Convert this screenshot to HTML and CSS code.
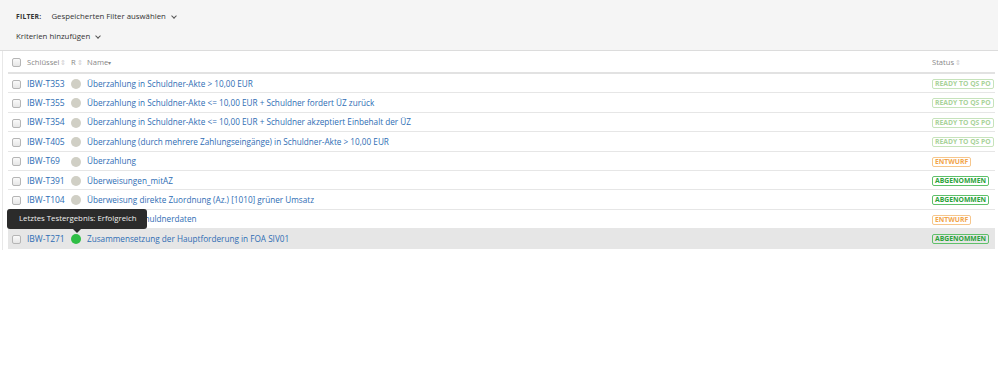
FILE: index.html
```html
<!DOCTYPE html>
<html lang="de">
<head>
  <meta charset="UTF-8">
  <title>Testfälle</title>
  <link rel="stylesheet" href="styles.css">
</head>
<body>

<div class="filter-bar">
  <div class="filter-line">
    <span class="filter-label">Filter:</span>
    <span class="dropdown">Gespeicherten Filter auswählen <span class="chev"></span></span>
  </div>
  <div class="filter-line">
    <span class="dropdown">Kriterien hinzufügen <span class="chev"></span></span>
  </div>
</div>

<div class="results">
  <table class="cases">
    <thead>
      <tr>
        <th class="col-check"><span class="box"></span></th>
        <th class="col-key">Schlüssel<span class="sort">&#8661;</span></th>
        <th class="col-r">R<span class="sort">&#8661;</span></th>
        <th class="col-name">Name<span class="sort-down">&#9662;</span></th>
        <th class="col-status">Status<span class="sort">&#8661;</span></th>
      </tr>
    </thead>
    <tbody>
      <tr>
        <td><span class="box"></span></td>
        <td><a href="#" class="key">IBW-T353</a></td>
        <td><span class="dot"></span></td>
        <td><a href="#">Überzahlung in Schuldner-Akte &gt; 10,00 EUR</a></td>
        <td><span class="badge ready">Ready to QS PO</span></td>
      </tr>
      <tr>
        <td><span class="box"></span></td>
        <td><a href="#" class="key">IBW-T355</a></td>
        <td><span class="dot"></span></td>
        <td><a href="#">Überzahlung in Schuldner-Akte &lt;= 10,00 EUR + Schuldner fordert ÜZ zurück</a></td>
        <td><span class="badge ready">Ready to QS PO</span></td>
      </tr>
      <tr>
        <td><span class="box"></span></td>
        <td><a href="#" class="key">IBW-T354</a></td>
        <td><span class="dot"></span></td>
        <td><a href="#">Überzahlung in Schuldner-Akte &lt;= 10,00 EUR + Schuldner akzeptiert Einbehalt der ÜZ</a></td>
        <td><span class="badge ready">Ready to QS PO</span></td>
      </tr>
      <tr>
        <td><span class="box"></span></td>
        <td><a href="#" class="key">IBW-T405</a></td>
        <td><span class="dot"></span></td>
        <td><a href="#">Überzahlung (durch mehrere Zahlungseingänge) in Schuldner-Akte &gt; 10,00 EUR</a></td>
        <td><span class="badge ready">Ready to QS PO</span></td>
      </tr>
      <tr>
        <td><span class="box"></span></td>
        <td><a href="#" class="key">IBW-T69</a></td>
        <td><span class="dot"></span></td>
        <td><a href="#">Überzahlung</a></td>
        <td><span class="badge draft">Entwurf</span></td>
      </tr>
      <tr>
        <td><span class="box"></span></td>
        <td><a href="#" class="key">IBW-T391</a></td>
        <td><span class="dot"></span></td>
        <td><a href="#">Überweisungen_mitAZ</a></td>
        <td><span class="badge done">Abgenommen</span></td>
      </tr>
      <tr>
        <td><span class="box"></span></td>
        <td><a href="#" class="key">IBW-T104</a></td>
        <td><span class="dot"></span></td>
        <td><a href="#">Überweisung direkte Zuordnung (Az.) [1010] grüner Umsatz</a></td>
        <td><span class="badge done">Abgenommen</span></td>
      </tr>
      <tr>
        <td><span class="box"></span></td>
        <td><a href="#" class="key">IBW-T118</a></td>
        <td><span class="dot"></span></td>
        <td><a href="#">Bearbeitung Schuldnerdaten</a></td>
        <td><span class="badge draft">Entwurf</span></td>
      </tr>
      <tr class="hover">
        <td><span class="box"></span></td>
        <td><a href="#" class="key">IBW-T271</a></td>
        <td class="has-tip">
          <span class="dot passed"></span>
          <div class="tooltip">Letztes Testergebnis: Erfolgreich</div>
        </td>
        <td><a href="#">Zusammensetzung der Hauptforderung in FOA SIV01</a></td>
        <td><span class="badge done">Abgenommen</span></td>
      </tr>
    </tbody>
  </table>
</div>

</body>
</html>
```

FILE: styles.css
```css
body {
  margin: 0;
  font-family: "Open Sans", "Noto Sans", sans-serif;
  font-size: 8.2px;
  color: #333;
  background: #fff;
}
.filter-bar {
  background: #f5f5f5;
  border-bottom: 1px solid #dcdcdc;
  padding: 6px 16px 4px;
  height: 40px;
  font-size: 7.8px;
}
.filter-line {
  height: 20px;
  line-height: 20px;
}
.filter-label {
  font-size: 6.8px;
  font-weight: bold;
  text-transform: uppercase;
  color: #333;
  margin-right: 8px;
  letter-spacing: 0.2px;
}
.dropdown {
  color: #333;
}
.chev {
  display: inline-block;
  width: 3px;
  height: 3px;
  border-right: 1.2px solid #555;
  border-bottom: 1.2px solid #555;
  transform: rotate(45deg);
  margin: 0 0 2px 4px;
  vertical-align: middle;
}
.results {
  margin-left: 2px;
  padding: 1px 3px 0 5px;
  border-left: 1px solid #e8e8e8;
  height: 198px;
}
.cases {
  width: 100%;
  border-collapse: collapse;
}
.cases th {
  font-weight: normal;
  color: #888;
  font-size: 7.6px;
  text-align: left;
  height: 20px;
  padding: 0;
  border-bottom: 2px solid #e2e2e2;
}
.cases td {
  height: 18.4px;
  padding: 0;
  border-bottom: 1px solid #e6e6e6;
  white-space: nowrap;
}
.col-check {
  width: 15px;
}
.col-key {
  width: 44px;
}
.col-r {
  width: 16px;
}
.col-status {
  width: 63px;
}
.cases th:first-child,
.cases td:first-child {
  padding-left: 4px;
}
.sort {
  color: #ccc;
  font-size: 7px;
  margin-left: 1px;
}
.sort-down {
  color: #888;
  font-size: 6px;
}
.box {
  display: inline-block;
  width: 7px;
  height: 7px;
  border: 1px solid #b5b5b5;
  border-radius: 2px;
  background: linear-gradient(#fafafa, #e6e6e6);
  vertical-align: middle;
}
.cases a {
  color: #2e6db4;
  text-decoration: none;
}
.cases a.key {
  font-size: 8.5px;
}
.dot {
  display: inline-block;
  width: 10px;
  height: 10px;
  border-radius: 50%;
  background: #d0cfc5;
  vertical-align: middle;
}
.dot.passed {
  background: #2fbe45;
}
.badge {
  display: inline-block;
  font-size: 6.8px;
  font-weight: bold;
  text-transform: uppercase;
  line-height: 8px;
  padding: 0 2px;
  border: 1px solid;
  border-radius: 2px;
  vertical-align: middle;
}
.badge.ready {
  color: #a9d39a;
  border-color: #c6e3bb;
}
.badge.draft {
  color: #f2a54a;
  border-color: #f6c68c;
}
.badge.done {
  color: #2aa23a;
  border-color: #5fc06a;
}
.hover td {
  background: #e6e6e6;
}
.has-tip {
  position: relative;
}
.tooltip {
  position: absolute;
  left: -64px;
  bottom: 19px;
  width: 140px;
  height: 20px;
  line-height: 19px;
  background: #2b2b2b;
  color: #f0f0f0;
  border-radius: 3px;
  font-size: 7.8px;
  text-indent: 12px;
  white-space: nowrap;
  box-sizing: border-box;
}
.tooltip::after {
  content: "";
  position: absolute;
  left: 66px;
  bottom: -4px;
  border-left: 4px solid transparent;
  border-right: 4px solid transparent;
  border-top: 4px solid #2b2b2b;
}
```
